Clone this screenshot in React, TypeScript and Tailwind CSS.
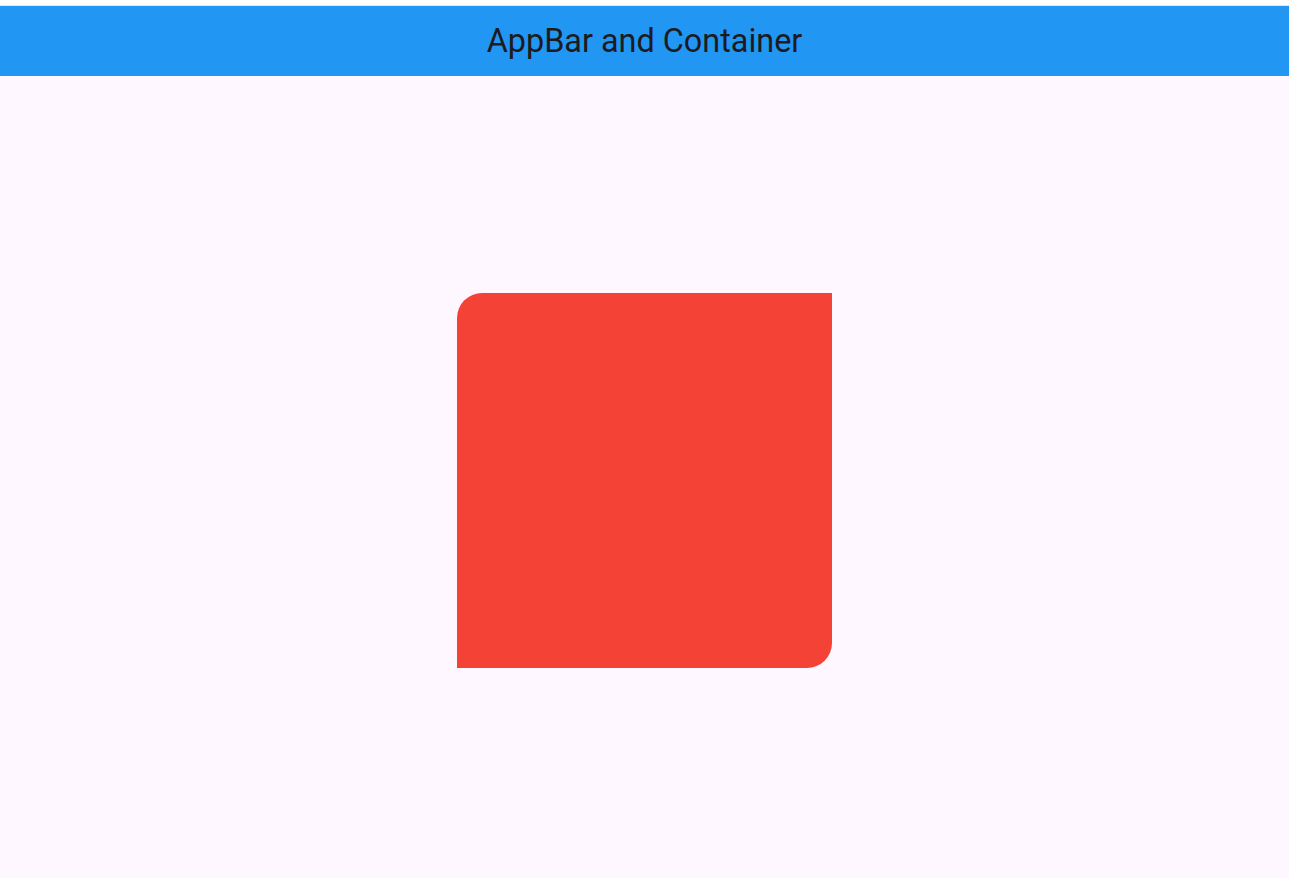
export default function App() {
  return (
    <div className="flex h-[878px] w-full flex-col bg-[#fef7ff] font-['Roboto',sans-serif]">
      {/* Status strip */}
      <div className="h-[6px] w-full border-b border-[#e6e6e6] bg-white" />

      {/* AppBar */}
      <header className="flex h-[70px] w-full items-center justify-center bg-[#2196f3]">
        <h1 className="text-[32.4px] leading-none text-[#1d1b20]">AppBar and Container</h1>
      </header>

      {/* Body */}
      <main className="flex flex-1 items-start justify-center pt-[217px]">
        <div className="size-[375px] rounded-tl-[25px] rounded-br-[25px] bg-[#f44336]" />
      </main>
    </div>
  )
}
